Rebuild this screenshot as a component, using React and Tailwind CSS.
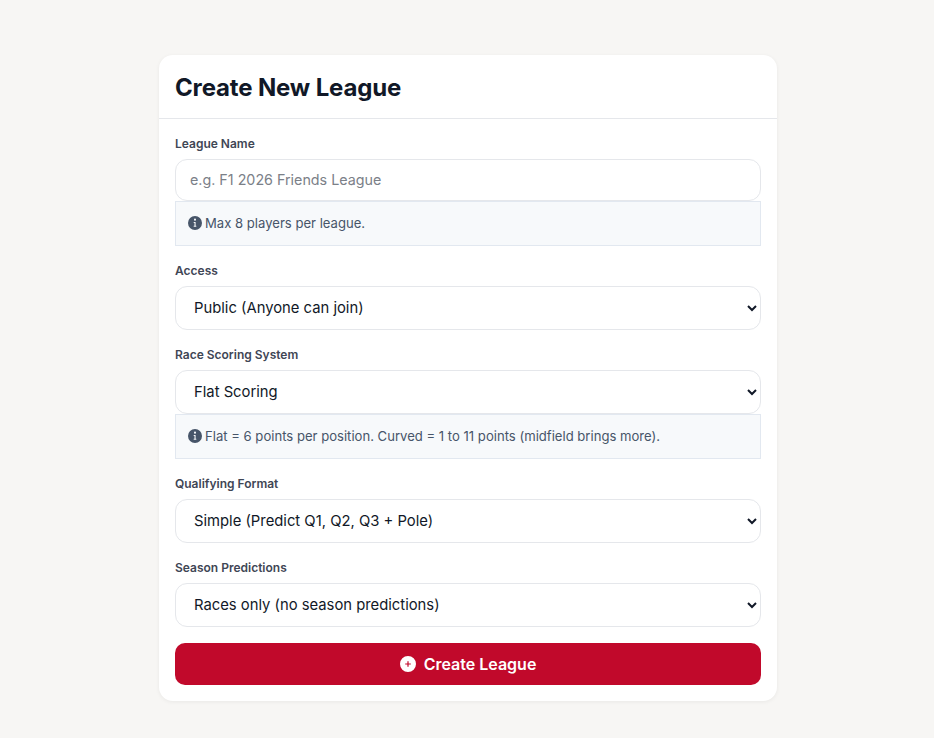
const font = { fontFamily: '"Inter", "Noto Sans", sans-serif' };

function Label({ children }) {
  return <label className="block text-[12px] leading-[18px] font-semibold text-[#3f4655] mb-[6px]">{children}</label>;
}

function InfoIcon() {
  return (
    <svg viewBox="1 1 14 14" className="w-[14px] h-[14px] shrink-0 -mt-[1px]" aria-hidden="true">
      <path
        fill="#475569"
        fillRule="evenodd"
        d="M8 1a7 7 0 1 1 0 14A7 7 0 0 1 8 1Zm0 2.6a1.05 1.05 0 1 0 0 2.1 1.05 1.05 0 0 0 0-2.1ZM6.7 7v1.1h.8v2.6h-.8v1.1h2.6v-1.1h-.7V7H6.7Z"
      />
    </svg>
  );
}

function Hint({ children }) {
  return (
    <div className="flex items-center gap-[3px] h-[45px] px-3 bg-[#f7f9fb] border border-[#e2e8f0] text-[13.1px] text-[#475569]">
      <InfoIcon />
      <span>{children}</span>
    </div>
  );
}

function SelectField({ label, value, hint, className }) {
  return (
    <div className={className}>
      <Label>{label}</Label>
      <select
        defaultValue={value}
        className="block w-full h-[44px] pl-[14px] pr-1 pb-[1px] bg-white border border-[#e5e7eb] rounded-[12px] text-[14.8px] text-[#111827]"
      >
        <option>{value}</option>
      </select>
      {hint && <Hint>{hint}</Hint>}
    </div>
  );
}

export default function App() {
  return (
    <div className="min-h-[738px] bg-[#f7f6f4] pt-[55px]" style={font}>
      <div className="w-[618px] ml-[159px] bg-white rounded-[14px] shadow-[0_1px_4px_rgba(0,0,0,0.06)]">
        <div className="h-[64px] px-4 pt-[2px] flex items-center border-b border-[#e5e7eb]">
          <h1 className="text-[24px] tracking-[-0.15px] font-bold text-[#111827]">Create New League</h1>
        </div>
        <div className="px-4 pt-4 pb-4">
          <Label>League Name</Label>
          <input
            placeholder="e.g. F1 2026 Friends League"
            className="block w-full h-[42px] px-[14px] pb-[2px] bg-white border border-[#e5e7eb] rounded-[12px] text-[14.3px] placeholder:text-[#7b8088]"
          />
          <Hint>Max 8 players per league.</Hint>

          <SelectField className="mt-4" label="Access" value="Public (Anyone can join)" />
          <SelectField
            className="mt-4"
            label="Race Scoring System"
            value="Flat Scoring"
            hint="Flat = 6 points per position. Curved = 1 to 11 points (midfield brings more)."
          />
          <SelectField className="mt-4" label="Qualifying Format" value="Simple (Predict Q1, Q2, Q3 + Pole)" />
          <SelectField className="mt-4" label="Season Predictions" value="Races only (no season predictions)" />

          <button className="mt-4 w-full h-[42px] pb-[1px] flex items-center justify-center gap-2 bg-[#c1092b] rounded-[10px] text-white text-[16px] font-semibold">
            <svg viewBox="0 0 16 16" className="w-4 h-4" aria-hidden="true">
              <path fill="#fff" fillRule="evenodd" d="M8 0a8 8 0 1 1 0 16A8 8 0 0 1 8 0Zm-.6 5.2v2.2H5.2v1.2h2.2v2.2h1.2V8.6h2.2V7.4H8.6V5.2H7.4Z" />
            </svg>
            Create League
          </button>
        </div>
      </div>
    </div>
  );
}
